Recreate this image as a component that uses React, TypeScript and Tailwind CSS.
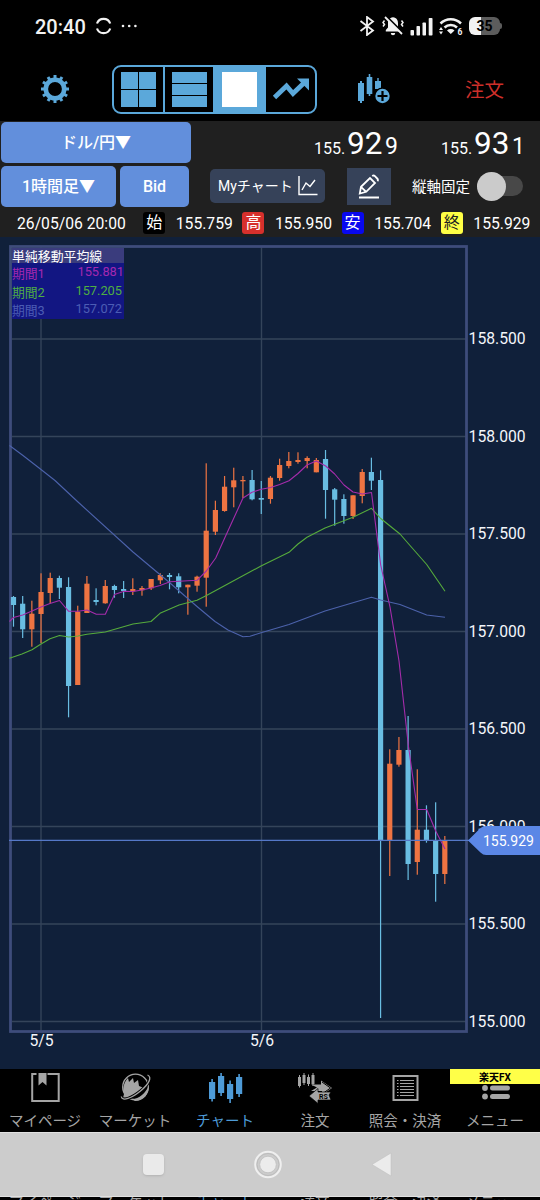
import type { ReactNode } from "react";
import clsx from "clsx";

// [wickTop, bodyTop, bodyBottom, wickBottom, direction], in canvas units
type Candle = [number, number, number, number, "up" | "down"];
type Point = [number, number];

const CANDLES: Candle[] = [
  [596, 597, 605, 626.7, "down"],
  [596, 603.7, 629.3, 638, "down"],
  [600.7, 613.7, 629.3, 646.7, "up"],
  [573.3, 592, 614, 643, "up"],
  [572.7, 578, 593, 603.3, "up"],
  [575.7, 578, 587.7, 599, "down"],
  [577.3, 587, 686, 717.3, "down"],
  [605.7, 611.7, 685, 685, "up"],
  [576, 583.7, 613, 613, "up"],
  [588.3, 600, 602, 605.3, "down"],
  [580, 586, 603.3, 603.7, "up"],
  [584.7, 586, 590, 597.7, "down"],
  [581, 589, 591, 598, "down"],
  [578.3, 589, 591.3, 595, "up"],
  [586, 588, 590.3, 595.7, "up"],
  [579, 579, 588.3, 590, "up"],
  [573.3, 575, 580.3, 584, "up"],
  [573, 575, 577, 589.3, "down"],
  [573.3, 576.3, 587.3, 593.3, "down"],
  [584.7, 584.7, 587.3, 614.7, "up"],
  [575.7, 576.7, 585.7, 591.7, "up"],
  [463.3, 530.7, 577.7, 606.7, "up"],
  [500.7, 510, 531.7, 535, "up"],
  [476, 486.7, 511, 511.7, "up"],
  [467.7, 480.3, 487.3, 507.3, "up"],
  [476, 480, 481.3, 498, "up"],
  [470, 480, 499.3, 500.3, "down"],
  [481, 498, 499.7, 514, "down"],
  [476, 477.7, 499, 503.7, "up"],
  [458.7, 465, 478, 480.7, "up"],
  [452, 461, 466, 468.3, "up"],
  [452.3, 460, 462, 463.7, "up"],
  [456.3, 458, 461, 468.3, "up"],
  [458, 460, 472.3, 472.3, "up"],
  [450, 459, 490, 518.7, "down"],
  [488, 489.3, 499.7, 525.7, "down"],
  [494.3, 499, 516, 523.7, "down"],
  [495.3, 495.3, 516, 519, "up"],
  [469, 472, 496, 503.3, "up"],
  [457.7, 472, 480.7, 490, "down"],
  [470.3, 480, 840, 1018, "down"],
  [749.3, 763.7, 840, 876, "up"],
  [737, 750, 764.7, 766.7, "up"],
  [716, 750, 864, 880, "down"],
  [769.3, 829.7, 862, 874.7, "up"],
  [805.3, 829.7, 840, 842.7, "down"],
  [802.3, 840, 874, 901.7, "down"],
  [836, 840, 874, 884, "up"],
];

const MA_SHORT: Point[] = [
  [9.5, 621.5], [13.5, 617.5], [22.7, 615], [32, 611], [41, 607], [50, 603.5], [59.5, 600.5],
  [68.7, 611.3], [78, 611.3], [87, 610], [96.3, 614.3], [105.3, 614.3], [114.5, 594.5],
  [124, 591.3], [133, 591.5], [142, 590], [151, 588], [160, 585.5], [170, 581.8], [188, 580.7],
  [197, 580.3], [206.3, 571], [215.7, 558], [224.7, 538], [243, 498], [252, 492.3],
  [261.3, 489.3], [270.7, 487.5], [279.7, 484.5], [289, 480.7], [298, 473.5], [307, 465],
  [316.3, 461], [325.7, 466], [334.7, 474], [344, 485], [353, 492], [362.3, 494],
  [371.5, 492.5], [380.7, 565], [390, 607], [399, 661], [408.3, 745], [417.3, 809.5],
  [426.7, 809.5], [435.7, 831], [445, 849],
];

const MA_MIDDLE: Point[] = [
  [9.5, 658.3], [22, 654], [32, 649.7], [41, 644], [50, 638.8], [59.5, 635.5], [68.7, 637],
  [78, 636], [87, 634.3], [105.3, 632], [133, 624], [151, 621.5], [160, 613.3], [179, 605],
  [197, 600.3], [206, 595.7], [224, 586], [261, 566], [289, 552.3], [298, 544], [307, 537.3],
  [325, 528], [353, 517.3], [371.5, 508.3], [380.7, 518.5], [400, 534], [410, 545.5],
  [426.7, 564.5], [445, 591.3],
];

const MA_LONG: Point[] = [
  [9.5, 445.5], [23, 455.5], [41, 469.5], [55, 480.5], [78, 502], [133, 552], [170, 583],
  [197, 606.5], [215, 621.5], [228, 630], [243, 636.7], [250, 636.3], [261, 632.7], [289, 624.5],
  [325, 611], [371.5, 597.3], [380.7, 600], [400, 604.5], [426.7, 615], [445, 617.3],
];

const PRICE_LINES = [
  { label: "158.500", y: 339 },
  { label: "158.000", y: 436.5 },
  { label: "157.500", y: 534 },
  { label: "157.000", y: 631.5 },
  { label: "156.500", y: 729 },
  { label: "156.000", y: 826.5 },
  { label: "155.500", y: 924 },
  { label: "155.000", y: 1021.5 },
];

const AVERAGES = [
  { name: "期間1", value: "155.881", color: "text-[#a428b0]", pad: "pr-0" },
  { name: "期間2", value: "157.205", color: "text-[#4fae43]", pad: "pr-0.5" },
  { name: "期間3", value: "157.072", color: "text-[#4c5db4]", pad: "pr-0.5" },
];

const OHLC = [
  { mark: "始", value: "155.759", badge: "bg-black text-white" },
  { mark: "高", value: "155.950", badge: "bg-[#d6302c] text-white" },
  { mark: "安", value: "155.704", badge: "bg-[#0808ee] text-white" },
  { mark: "終", value: "155.929", badge: "bg-[#ffff45] text-[#222]" },
];

const toPoints = (points: Point[]) => points.map((p) => p.join(",")).join(" ");

function StatusBar() {
  return (
    <div className="flex h-[54px] items-center pl-[35px] text-[#f2f2f2]">
      <span className="w-[52px] text-[20px] leading-none font-medium">20:40</span>
      <svg className="-mt-[2px] ml-[8px]" width="18" height="18" viewBox="0 0 18 18" fill="none" stroke="currentColor" strokeWidth="2.2">
        <path d="M2 6.5A7 7 0 0 1 15.200 6.500M2 11.500A7 7 0 0 0 15.200 11.500" />
      </svg>
      <svg className="-mt-[2px] ml-[8px]" width="17" height="4" viewBox="0 0 17 4" fill="currentColor">
        <circle cx="2" cy="2" r="1.3" />
        <circle cx="8.2" cy="2" r="1.3" />
        <circle cx="14.4" cy="2" r="1.3" />
      </svg>

      <svg className="-mt-[2px] ml-[221px]" width="16" height="20" viewBox="0 0 16 20" fill="none" stroke="currentColor" strokeWidth="1.8">
        <path d="M1.5 5 14 14.5 8 19V1l6 4.5L1.5 15" />
      </svg>
      <svg className="-mt-[3px] ml-[6px]" width="24" height="20" viewBox="0 0 24 20">
        <path d="M12 1.2c-3.7.4-5 3-5 6v4.2L4.8 14v1.5h14.4V14L17 11.4V7.2c0-3-1.3-5.6-5-6zM9.8 17h4.4a2.2 2.2 0 0 1-4.4 0z" fill="currentColor" />
        <path d="m3.5 4.5-1.500 2 1.500 2-1.500 2M20.500 4.500l1.500 2-1.500 2 1.500 2" fill="none" stroke="currentColor" strokeWidth="1.5" />
        <path d="M5.5.5 22.5 17.5" stroke="#000" strokeWidth="2.2" />
        <path d="M4 1 21 18" stroke="currentColor" strokeWidth="1.8" />
      </svg>
      <svg className="-mt-[2px] ml-[5px]" width="24" height="19" viewBox="0 0 24 19" fill="currentColor">
        <rect x="0.5" y="13" width="3.5" height="5.5" rx=".8" />
        <rect x="6.5" y="9" width="3.5" height="9.5" rx=".8" />
        <rect x="12.5" y="5.5" width="3.5" height="13" rx=".8" />
        <rect x="18.7" y="1" width="3.8" height="17.5" rx=".8" />
      </svg>
      <svg className="-mt-[2px] ml-[4px]" width="26" height="20" viewBox="0 0 26 20">
        <path d="M2.500 7.500a14.500 14.500 0 0 1 20.500 0M6.500 11.500a9 9 0 0 1 12.500 0" fill="none" stroke="currentColor" strokeWidth="2.5" />
        <path d="M9 14.500a5.500 5.500 0 0 1 7.500 0L12.800 18zM1 14l2-3 2 3zM1 15.500l2 3 2-3z" fill="currentColor" />
        <text x="19.5" y="19" fontSize="8.5" fontWeight="700" fill="currentColor">6</text>
      </svg>
      <div className="-mt-[3px] ml-[5px] flex items-center">
        <div className="flex h-[18px] w-[31px] items-center justify-center rounded-[6px] bg-linear-to-r from-[#f2f2f2] from-38% to-[#5c5c5c] to-38% text-[14px] leading-none font-bold text-black">
          35
        </div>
        <div className="h-[6px] w-[2px] rounded-r bg-[#5c5c5c]" />
      </div>
    </div>
  );
}

function GearIcon() {
  const teeth = Array.from({ length: 12 }, (_, i) => i * 30);
  return (
    <svg className="mt-[2px]" width="28" height="28" viewBox="-14 -14 28 28">
      <circle r="9.2" fill="none" stroke="#5ba8da" strokeWidth="4.6" />
      {teeth.map((angle) => (
        <rect key={angle} x="-1.5" y="-14" width="3" height="4" fill="#5ba8da" transform={`rotate(${angle})`} />
      ))}
    </svg>
  );
}

function Toolbar() {
  return (
    <div className="flex h-[67px] items-center pl-[41px]">
      <GearIcon />
      <div className="mt-[3px] ml-[43px] flex h-[49px] w-[205px] overflow-hidden rounded-[9px] border-2 border-[#5ba8da]">
        <div className="flex w-[51px] items-center justify-center border-r-2 border-[#5ba8da]">
          <div className="grid grid-cols-2 gap-px">
            <div className="size-[17px] bg-[#5ba8da]" />
            <div className="size-[17px] bg-[#5ba8da]" />
            <div className="size-[17px] bg-[#5ba8da]" />
            <div className="size-[17px] bg-[#5ba8da]" />
          </div>
        </div>
        <div className="flex w-[48px] flex-col items-center justify-center gap-px">
          <div className="h-[11px] w-[35px] bg-[#5ba8da]" />
          <div className="h-[11px] w-[35px] bg-[#5ba8da]" />
          <div className="h-[11px] w-[35px] bg-[#5ba8da]" />
        </div>
        <div className="flex w-[53px] items-center justify-center bg-[#5ba8da]">
          <div className="size-[35px] bg-white" />
        </div>
        <div className="flex grow items-center justify-center">
          <svg width="38" height="24" viewBox="0 0 38 24" fill="none">
            <path d="M2.500 20.500 14.500 9 21 16.500 33 5" stroke="#5ba8da" strokeWidth="4.8" />
            <path d="M25 1.500h12v12z" fill="#5ba8da" />
          </svg>
        </div>
      </div>
      <svg className="mt-[4px] ml-[40px]" width="34" height="32" viewBox="0 0 34 32" fill="#5ba8da">
        <path d="M1 9h2V7h2v2h2v18H5v2H3v-2H1zM9.700 3h2V0h1.600v3h2v17h-2v2h-1.600v-2h-2zM18 7h2.300V4h1.400v3H24v8h-6z" />
        <circle cx="25.5" cy="22" r="8.5" fill="#000" />
        <circle cx="25.5" cy="22" r="7.2" />
        <path d="M25.500 17v10M20.500 22h10" stroke="#000" strokeWidth="2.2" />
      </svg>
      <button className="mt-[6px] ml-[74px] text-[19.5px] leading-none text-[#cd2f2a]">注文</button>
    </div>
  );
}

function Quote({ large, small, className }: { large: string; small: string; className?: string }) {
  return (
    <div className={clsx("flex items-baseline leading-none text-white", className)}>
      <span className="w-[33px] text-[16px]">155.</span>
      <span className="w-[38px] text-[31.5px]">{large}</span>
      <span className="text-[23px]">{small}</span>
    </div>
  );
}

function PriceHeader() {
  return (
    <div className="h-[116px] bg-[#202020] text-white">
      <div className="flex h-[44px] pt-[1px] pl-px">
        <button className="h-[41px] w-[190px] rounded-[5px] bg-[#628fdc] text-[16px] font-medium">ドル/円▼</button>
        <Quote large="92" small="9" className="ml-[123px] h-[41px] pt-[6px]" />
        <Quote large="93" small="1" className="ml-[43px] h-[41px] pt-[6px]" />
      </div>
      <div className="flex h-[42px] items-center pl-px">
        <button className="h-[41px] w-[115px] rounded-[5px] bg-[#628fdc] pt-px text-[16px] font-medium">1時間足▼</button>
        <button className="ml-[4px] h-[41px] w-[69px] rounded-[5px] bg-[#628fdc] pt-px text-[16px] font-medium">Bid</button>
        <button className="ml-[21px] flex h-[34px] w-[115px] items-center rounded-[5px] bg-[#364259] pl-[8px] text-[14px] whitespace-nowrap">
          Myチャート
          <svg className="ml-[5px] shrink-0" width="20" height="20" viewBox="0 0 20 20" fill="none" stroke="currentColor" strokeWidth="1.4">
            <path d="M1 0v18.500h18.500M4 14l4-7 4 3.500 5-6.500" />
          </svg>
        </button>
        <button className="ml-[22px] flex h-[37px] w-[44px] items-center justify-center bg-[#364259]">
          <svg width="22" height="25" viewBox="0 0 22 25" fill="none" stroke="currentColor" strokeWidth="1.8">
            <path d="M1.800 19.500 3 12.800 12 4l5 5-8.800 8.800zM3 12.800l5.200 5M14.200 2q1.500-1 2.700.200L19.200 4.500q1.300 1.300.200 2.600" />
            <path d="M1 23.500h20" strokeWidth="2" />
          </svg>
        </button>
        <span className="ml-[21px] w-[60px] pt-[3px] text-[14.5px] whitespace-nowrap">縦軸固定</span>
        <div className="ml-[5px] flex h-[20px] w-[46px] items-center rounded-full bg-[#484848]">
          <div className="size-[29px] shrink-0 rounded-full bg-[#cbcbcb]" />
        </div>
      </div>
      <div className="flex h-[30px] items-center pt-[3px] pl-[17px] text-[15.7px]">
        <span className="w-[127.5px]">26/05/06 20:00</span>
        {OHLC.map((item) => (
          <div key={item.mark} className="flex w-[99.2px] shrink-0 items-center">
            <span className={clsx("flex size-[22px] items-center justify-center rounded-[3px] text-[16px] leading-none", item.badge)}>
              {item.mark}
            </span>
            <span className="ml-[10.5px]">{item.value}</span>
          </div>
        ))}
      </div>
    </div>
  );
}

function Chart() {
  return (
    <div className="relative h-[832px] bg-[#10203a]">
      <svg className="block" width="540" height="832" viewBox="0 237 540 832">
        <g stroke="#34445a" strokeWidth="1.4">
          {PRICE_LINES.map((line) => (
            <line key={line.label} x1="12" x2="466" y1={line.y} y2={line.y} />
          ))}
          <line x1="41" x2="41" y1="247" y2="1031" />
          <line x1="261.5" x2="261.5" y1="247" y2="1031" />
        </g>
        <rect x="10.5" y="246.5" width="456" height="785" fill="none" stroke="#3e4c7b" strokeWidth="2.8" />
        {CANDLES.map(([top, bodyTop, bodyBottom, bottom, direction], i) => {
          const x = 13.5 + i * 9.177;
          return (
            <g key={i} fill={direction === "up" ? "#ee7442" : "#69bde2"}>
              <rect x={x - 0.6} y={top} width="1.2" height={bottom - top} />
              <rect x={x - 2.6} y={bodyTop} width="5.2" height={bodyBottom - bodyTop} />
            </g>
          );
        })}
        <g fill="none" strokeWidth="1.1" strokeLinejoin="round">
          <polyline points={toPoints(MA_LONG)} stroke="#4c62ab" />
          <polyline points={toPoints(MA_MIDDLE)} stroke="#56ab3c" />
          <polyline points={toPoints(MA_SHORT)} stroke="#a52cab" />
        </g>
        <line x1="9" x2="470" y1="840.3" y2="840.3" stroke="#5578c8" strokeWidth="1.2" />
        <g fill="#f4f6fa" fontSize="15.7">
          {PRICE_LINES.map((line) => (
            <text key={line.label} x="468.6" y={line.y + 5.4}>{line.label}</text>
          ))}
          <text x="29.5" y="1046">5/5</text>
          <text x="250" y="1046">5/6</text>
        </g>
        <path d="M468 840.500 480.500 828Q483 826 486 826H540V855H486Q483 855 480.500 852.500Z" fill="#5b87e6" />
        <text x="483" y="846.3" fontSize="14" fill="#fff">155.929</text>
      </svg>
      <div className="absolute top-[11px] left-[12px] w-[112px] bg-[#121682] leading-none">
        <div className="h-[15px] bg-[#3a3c7d] text-[12.9px] leading-[17px] whitespace-nowrap text-white">単純移動平均線</div>
        {AVERAGES.map((row) => (
          <div key={row.name} className={clsx("flex h-[18.7px] items-center justify-between text-[12.8px]", row.color, row.pad)}>
            <span className="pt-[4px]">{row.name}</span>
            <span>{row.value}</span>
          </div>
        ))}
      </div>
    </div>
  );
}

const NAV_ITEMS: { label: string; icon: ReactNode; active?: boolean }[] = [
  {
    label: "マイページ",
    icon: (
      <>
        <path d="M7.500 5H3.200V32h26.500V5H18.500" fill="none" stroke="currentColor" strokeWidth="2" />
        <path d="M9.500 4h8v12.500l-4-3.500-4 3.500z" />
      </>
    ),
  },
  {
    label: "マーケット",
    icon: (
      <>
        <circle cx="16.5" cy="18" r="12.8" fill="none" stroke="currentColor" strokeWidth="1.3" />
        <path d="M5 25C3 18 6 12 9 9l1 4 4-4 1 5 4-3 1 6 5 2C19 26 11 29 4 29z" />
        <path d="M13 30c7 0 14-6 17-14 0 9-5 16-14 16z" />
        <path d="M28.500 6c5 2 1.500 9-7 16S3 33 2.300 27.500" fill="none" stroke="#000" strokeWidth="3" />
        <path d="M28.500 6c5 2 1.500 9-7 16S3 33 2.300 27.500" fill="none" stroke="currentColor" strokeWidth="1.3" />
      </>
    ),
  },
  {
    label: "チャート",
    active: true,
    icon: <path d="M0 13h2.300v-3h1.600v3h2.300v17H3.900v2.500H2.300V30H0zM9 7h2.300V4h1.600v3h2.300v17h-2.300v3h-1.600v-3H9zM18 15h2.300v-3.500h1.600V15h2.300v15h-2.300v4h-1.600v-4H18zM27 8h2.300V5h1.600v3h2.300v17h-2.300v3h-1.600v-3H27z" />,
  },
  {
    label: "注文",
    icon: (
      <>
        <path d="M-1 8h1V6h1v2h1v9H1v1.500H0V17h-1zM3.500 6h1V4h1v2h1v8h-1v2h-1v-2h-1zM8 8h1V5.500h1V8h1v7h-1v2H9v-2H8zM12.500 6h1V4h1v2h1v9h-1v2h-1v-2h-1z" />
        <path d="M12 15.500h10v-4L33 19l-10 7v-4H12l6-3.500z" />
        <path d="m23 13 8.500 6-8.500 6" fill="none" stroke="#000" strokeWidth="1" />
        <path d="m10 27 9-7.500V23h13l-2 3 2 5H19v3.500z" stroke="#000" strokeWidth=".7" />
        <text x="20" y="30.300" fontSize="7" fontWeight="700" fill="#000">RS</text>
      </>
    ),
  },
  {
    label: "照会・決済",
    icon: (
      <>
        <rect x="4.5" y="7" width="24" height="24" fill="none" stroke="currentColor" strokeWidth="2" />
        <path d="M11 11.500h14M11 14.500h14M11 17.500h14M11 20.500h14M11 23.500h14M11 26.500h14" stroke="currentColor" strokeWidth="1.1" />
        <path d="M8 11.500h1.500M8 14.500h1.500M8 17.500h1.500M8 20.500h1.500M8 23.500h1.500M8 26.500h1.500" stroke="currentColor" strokeWidth="1.1" />
      </>
    ),
  },
  {
    label: "メニュー",
    icon: (
      <>
        <circle cx="6" cy="19" r="2.9" />
        <circle cx="6" cy="27.5" r="2.9" />
        <rect x="11" y="16.5" width="20" height="5" rx="2.5" />
        <rect x="11" y="25" width="20" height="5" rx="2.5" />
      </>
    ),
  },
];

function BottomNav() {
  return (
    <div className="relative grid h-[63px] grid-cols-6 bg-black">
      {NAV_ITEMS.map((item) => (
        <div key={item.label} className={clsx("flex flex-col items-center", item.active ? "text-[#4e9bd8]" : "text-[#a5a5a5]")}>
          <svg className="overflow-visible" width="33" height="36" viewBox="0 0 33 36" fill="currentColor">
            {item.icon}
          </svg>
          <span className="mt-[9px] text-[14.5px] leading-[16px] whitespace-nowrap">{item.label}</span>
        </div>
      ))}
      <div className="absolute top-0 right-0 h-[14.5px] w-[90px] bg-[#ffff48] text-center text-[10px] leading-[17px] font-bold text-black">楽天FX</div>
    </div>
  );
}

function SystemNav() {
  return (
    <div className="flex h-[65px] items-center border-y border-[#e0e0e0] bg-[#cccccc] pl-[143px]">
      <div className="size-[21px] rounded-[4px] bg-[#eaeaea] shadow-sm" />
      <svg className="ml-[89px] overflow-visible" width="30" height="30" viewBox="0 0 30 30">
        <circle cx="15" cy="14.5" r="12.8" fill="none" stroke="#efefef" strokeWidth="2" />
        <circle cx="15" cy="14.5" r="11" fill="none" stroke="#bcbcbc" strokeWidth="1" />
        <circle cx="15" cy="14.5" r="8.3" fill="#ececec" stroke="#bcbcbc" strokeWidth=".7" />
      </svg>
      <svg className="ml-[88px]" width="22" height="26" viewBox="0 0 22 26">
        <path d="M1 12.500 20 1v23z" fill="#ececec" stroke="#bdbdbd" strokeWidth=".5" />
      </svg>
    </div>
  );
}

export default function App() {
  return (
    <div className="h-[1200px] w-[540px] overflow-hidden bg-black font-[Roboto,'Noto_Sans_CJK_JP',sans-serif]">
      <StatusBar />
      <Toolbar />
      <PriceHeader />
      <Chart />
      <BottomNav />
      <SystemNav />
      {/* Sliver of the tab labels showing below the translucent system bar */}
      <div className="grid h-[3px] grid-cols-6 overflow-hidden bg-black">
        {NAV_ITEMS.map((item) => (
          <span
            key={item.label}
            className={clsx("-mt-[2px] text-center text-[14.5px] leading-[16px] whitespace-nowrap", item.active ? "text-[#4e9bd8]" : "text-[#a5a5a5]")}
          >
            {item.label}
          </span>
        ))}
      </div>
    </div>
  );
}
